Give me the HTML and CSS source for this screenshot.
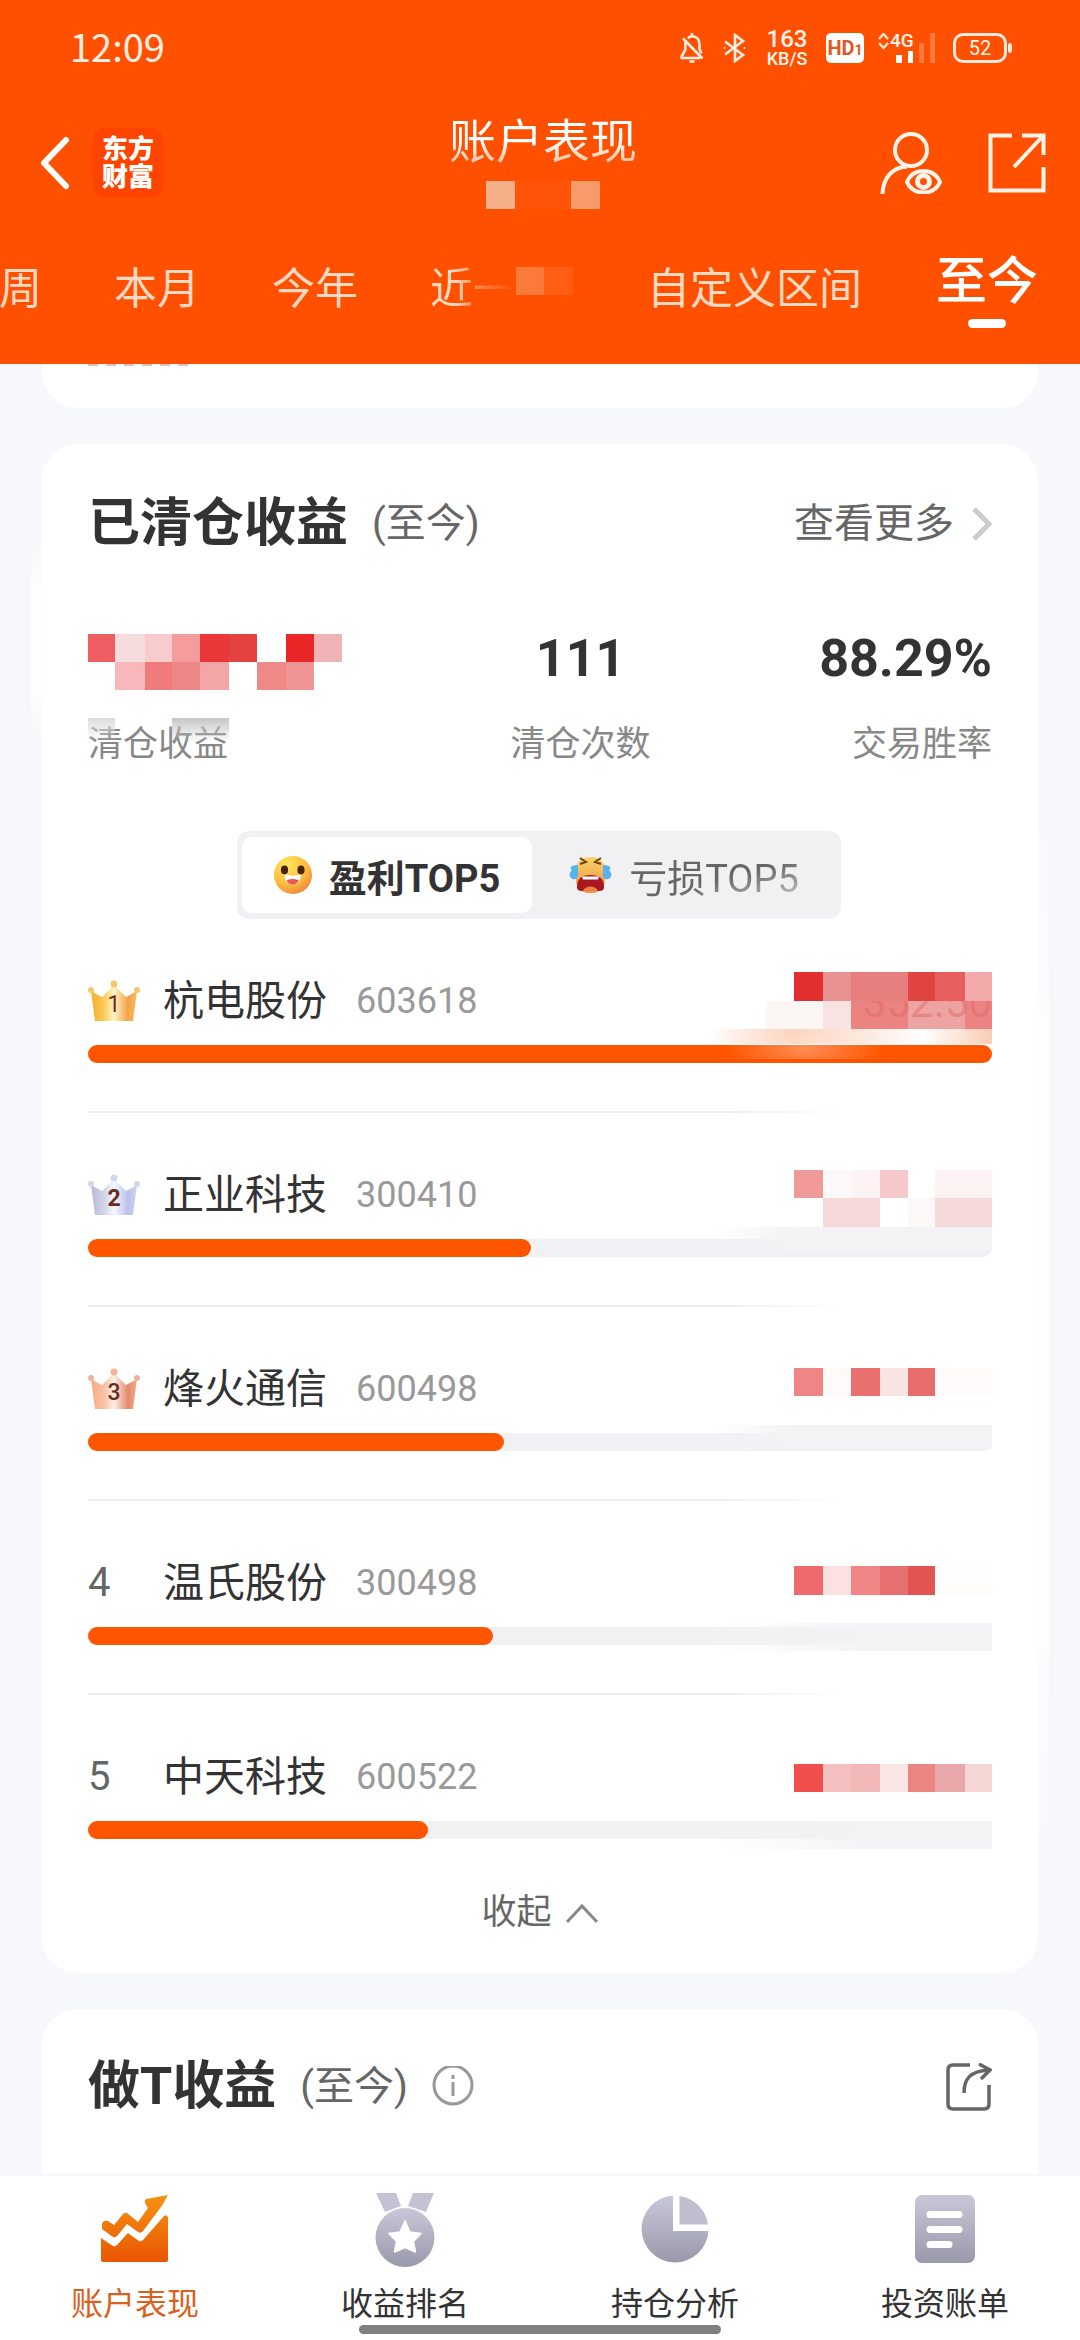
FILE: index.html
```html
<!DOCTYPE html>
<html lang="zh-CN">
<head>
<meta charset="utf-8">
<meta name="viewport" content="width=device-width, initial-scale=1">
<title>账户表现</title>
<link rel="stylesheet" href="styles.css">
</head>
<body>
<div class="app">
  <header class="top">
    <div class="status">
      <span class="clock">12:09</span>
      <div class="status-icons">
        <svg class="ico-bell" width="26" height="30" viewBox="0 0 26 30" fill="none" stroke="#ffeee2" stroke-width="2.6"><path d="M9 5.500C10 4 11.500 3.300 13 3.300c4.500 0 7.500 3.200 7.500 8v5l2 4M6.300 9.500V17L2.500 23.500c-.5 1 0 1.500 1 1.500H21M4 5.500 23.500 25.500"/><path d="M13 0v3M10.500 28.500h5"/></svg>
        <svg class="ico-bt" width="23" height="30" viewBox="0 0 23 30" fill="none" stroke="#ffeee2" stroke-width="2.600"><path d="M2 8.500 20 22 12 28V2l8 6L2 21.500"/><circle cx="1.500" cy="15" r="1" fill="#ffeee2" stroke="none"/><circle cx="21.500" cy="15" r="1" fill="#ffeee2" stroke="none"/></svg>
        <span class="speed"><b>163</b><small>KB/S</small></span>
        <span class="hd">HD<i>1</i></span>
        <span class="signal">
          <svg width="57" height="30" viewBox="0 0 57 30"><path d="M1 6 5.500 1 10 6M1 10l4.500 5 4.500-5" fill="none" stroke="#ffe3d0" stroke-width="2.400"/><path d="M18 22h6v8h-6zM30 18h5v12h-5z" fill="#fff"/><path d="M41 10h5v20h-5zM52 0h5v30h-5z" fill="#ff7a3d"/></svg>
          <b>4G</b>
        </span>
        <span class="battery">52</span>
      </div>
    </div>

    <div class="titlebar">
      <div class="side">
        <button class="icon-btn" aria-label="返回"><svg width="30" height="54" viewBox="0 0 30 54" fill="none" stroke="#fff" stroke-width="6" stroke-linecap="round" stroke-linejoin="round"><path d="M26 4 4 27l22 23"/></svg></button>
        <span class="logo"><span>东方</span><span>财富</span></span>
      </div>
      <div class="title">
        <h1>账户表现</h1>
        <svg width="114" height="28" viewBox="0 0 114 28" shape-rendering="crispEdges"><path fill="#f5b08a" d="M0 0h29v28H0z"/><path fill="#ff5409" d="M29 0h56v28H29z"/><path fill="#f69b69" d="M85 0h29v28H85z"/></svg>
      </div>
      <div class="side side-end">
        <button class="icon-btn" aria-label="查看账户"><svg width="62" height="62" viewBox="0 0 62 62" fill="none" stroke="#fff3ea" stroke-width="4"><circle cx="31" cy="18" r="16"/><path d="M2.500 62C3 46 12 35.500 27 34.500"/><path d="M27 50c3-7 9-11 16.500-11S57 43 60 50c-3 7-9 10.500-16.500 10.500S30 57 27 50z" stroke-width="4"/><circle cx="43.500" cy="49.500" r="6" stroke-width="5"/></svg></button>
        <button class="icon-btn" aria-label="分享"><svg width="58" height="60" viewBox="0 0 58 60" fill="none" stroke="#fff3ea" stroke-width="4"><path d="M24 2.500H2.500V57.500H55.500V34M34 2.500H55.500V22M54 4 26 34"/></svg></button>
      </div>
    </div>

    <nav class="tabs">
      <a href="#week">本周</a>
      <a href="#month">本月</a>
      <a href="#year">今年</a>
      <a href="#last" class="tab-last"><span>近一</span><svg width="57" height="28" viewBox="0 0 57 28" shape-rendering="crispEdges"><path fill="#fa7a3c" d="M0 0h28v28H0z"/><path fill="#ff5c14" d="M28 0h29v28H28z"/></svg></a>
      <a href="#custom" class="tab-custom">自定义区间</a>
      <a href="#all" class="active" aria-current="page">至今</a>
    </nav>
  </header>

  <main>
    <section class="card card-prev"><div class="cut-line"></div></section>

    <section class="card card-closed">
      <div class="card-head">
        <h2>已清仓收益</h2><span class="range">(至今)</span>
        <a class="more" href="#more">查看更多<svg width="22" height="36" viewBox="0 0 22 36" fill="none" stroke="#ccc" stroke-width="5"><path d="M4 3 19 18 4 33"/></svg></a>
      </div>

      <dl class="stats">
        <div class="stat">
          <dt><span class="blot"></span>清仓收益</dt>
          <dd><svg width="254" height="56" viewBox="0 0 254 56" shape-rendering="crispEdges">
            <path fill="#ed5d62" d="M0 0h27v28H0z"/><path fill="#f6dcdd" d="M27 0h30v28H27z"/><path fill="#f8cbcd" d="M57 0h27v28H57z"/><path fill="#f49c9e" d="M84 0h28v28H84z"/><path fill="#ea3739" d="M112 0h29v28h-29z"/><path fill="#e44241" d="M141 0h28v28h-28z"/><path fill="#ea2727" d="M198 0h28v28h-28z"/><path fill="#f0b3b5" d="M226 0h28v28h-28z"/>
            <path fill="#f8b7ba" d="M27 28h30v28H27z"/><path fill="#f07b7c" d="M57 28h27v28H57z"/><path fill="#ed8787" d="M84 28h28v28H84z"/><path fill="#f4a5a7" d="M112 28h29v28h-29z"/><path fill="#ee8988" d="M169 28h29v28h-29z"/><path fill="#ef9595" d="M198 28h28v28h-28z"/>
          </svg></dd>
        </div>
        <div class="stat stat-mid"><dt>清仓次数</dt><dd>111</dd></div>
        <div class="stat stat-end"><dt>交易胜率</dt><dd>88.29%</dd></div>
      </dl>

      <div class="switch">
        <button class="on"><svg width="38" height="38" viewBox="0 0 38 38"><defs><radialGradient id="smile" cx=".35" cy=".25" r=".85"><stop offset="0" stop-color="#ffe75e"/><stop offset=".6" stop-color="#fdbb3d"/><stop offset="1" stop-color="#f07b3e"/></radialGradient></defs><circle cx="19" cy="19" r="19" fill="url(#smile)"/><ellipse cx="10.500" cy="14" rx="3.600" ry="4.400" fill="#4a2208"/><ellipse cx="27" cy="14" rx="3.600" ry="4.400" fill="#4a2208"/><path d="M10.500 18.500c5 1.500 11.500 1.500 16.500 0C27 25.500 23.500 28.500 18.700 28.500s-8.200-3.500-8.200-10z" fill="#fff"/><path d="M12.500 24.500c3.500-2 9-2 12.500 0C23 27.500 21 28.500 18.700 28.500S14 27.500 12.500 24.500z" fill="#ee5a50"/></svg>盈利TOP5</button>
        <button><svg width="43" height="38" viewBox="0 0 43 38"><defs><linearGradient id="cry" x1="0" y1="0" x2="0" y2="1"><stop offset="0" stop-color="#f9d568"/><stop offset="1" stop-color="#f0903e"/></linearGradient></defs><rect x="7" y="1" width="29" height="36" rx="13" fill="url(#cry)"/><path d="M11 2l6 4-6 2M32 2l-6 4 6 2" fill="none" stroke="#71431b" stroke-width="2"/><path d="M9 9C2 9 0 12 3 14c-3 3-3 6-1 8 4 3 7 0 7-3zM34 9c7 0 9 3 6 5 3 3 3 6 1 8-4 3-7 0-7-3z" fill="#54b3ee"/><path d="M8 31c0-8 4-12 13.500-12S35 23 35 31c0 3-2 4-5 4H13c-3 0-5-1-5-4z" fill="#a91820"/><path d="M13 20.500h17l-1 3H14z" fill="#fff"/><path d="M14 35c2-6 13-6 15 0z" fill="#ef7f45"/></svg><span class="faded">亏损TOP5</span></button>
      </div>

      <div class="ranking">
        <ol>
          <li>
            <div class="line"><span class="rank"><svg width="52" height="42" viewBox="0 0 52 42"><defs><linearGradient id="gold"><stop offset="0" stop-color="#f6ae2e"/><stop offset=".25" stop-color="#fbc64f"/><stop offset=".5" stop-color="#fff3c4"/><stop offset=".8" stop-color="#f5a34a"/><stop offset="1" stop-color="#f7bd5d"/></linearGradient></defs><path d="M3 11 14 17 26 5 38 17 49 11 45 41H7z" fill="url(#gold)"/><g fill="#f2c96b"><circle cx="3" cy="10" r="3"/><circle cx="26" cy="4" r="3.500"/><circle cx="49" cy="10" r="3"/></g></svg><b class="thin">1</b></span><span class="name">杭电股份</span><span class="code">603618</span></div>
            <div class="bar"><i style="width:100%"></i></div>
          </li>
          <li>
            <div class="line"><span class="rank"><svg width="52" height="42" viewBox="0 0 52 42"><defs><linearGradient id="silver"><stop offset="0" stop-color="#b9b9d8"/><stop offset=".3" stop-color="#d3d5ea"/><stop offset=".5" stop-color="#f6f8ff"/><stop offset=".8" stop-color="#bcc0e8"/><stop offset="1" stop-color="#d0d4f2"/></linearGradient></defs><path d="M3 11 14 17 26 5 38 17 49 11 45 41H7z" fill="url(#silver)"/><g fill="#d3d6ee"><circle cx="3" cy="10" r="3"/><circle cx="26" cy="4" r="3.500"/><circle cx="49" cy="10" r="3"/></g></svg><b>2</b></span><span class="name">正业科技</span><span class="code">300410</span></div>
            <div class="bar"><i style="width:49%"></i></div>
          </li>
          <li>
            <div class="line"><span class="rank"><svg width="52" height="42" viewBox="0 0 52 42"><defs><linearGradient id="bronze"><stop offset="0" stop-color="#f6ab87"/><stop offset=".3" stop-color="#f8c3a6"/><stop offset=".5" stop-color="#fdefe5"/><stop offset=".8" stop-color="#e58a6b"/><stop offset="1" stop-color="#f0ad92"/></linearGradient></defs><path d="M3 11 14 17 26 5 38 17 49 11 45 41H7z" fill="url(#bronze)"/><g fill="#eeb49d"><circle cx="3" cy="10" r="3"/><circle cx="26" cy="4" r="3.500"/><circle cx="49" cy="10" r="3"/></g></svg><b class="mid">3</b></span><span class="name">烽火通信</span><span class="code">600498</span></div>
            <div class="bar"><i style="width:46%"></i></div>
          </li>
          <li>
            <div class="line"><span class="rank">4</span><span class="name">温氏股份</span><span class="code">300498</span></div>
            <div class="bar"><i style="width:44.8%"></i></div>
          </li>
          <li>
            <div class="line"><span class="rank">5</span><span class="name">中天科技</span><span class="code">600522</span></div>
            <div class="bar"><i style="width:37.6%"></i></div>
          </li>
        </ol>

        <div class="masks">
          <div class="mask mask-hot">
            <svg width="226" height="57" viewBox="0 0 226 57" shape-rendering="crispEdges"><path fill="#e22e2e" d="M28 0h29v29H28z"/><path fill="#e99292" d="M57 0h28v29H57z"/><path fill="#e77f7e" d="M85 0h57v29H85z"/><path fill="#df4342" d="M142 0h27v29h-27z"/><path fill="#e75e5e" d="M169 0h30v29h-30z"/><path fill="#f3aaab" d="M199 0h27v29h-27z"/><path fill="#fcf6f5" d="M0 29h57v28H0z"/><path fill="#f9e2e2" d="M57 29h28v28H57z"/><path fill="#eb8381" d="M85 29h57v28H85z"/><path fill="#eda3a2" d="M142 29h57v28h-57z"/><path fill="#ec8382" d="M199 29h27v28h-27z"/></svg>
            <span class="ghost">352.50</span>
          </div>
          <div class="mask">
            <svg width="226" height="57" viewBox="0 0 226 57" shape-rendering="crispEdges"><path fill="#f09999" d="M28 0h29v28H28z"/><path fill="#fef9f9" d="M57 0h28v28H57z"/><path fill="#fdf3f2" d="M85 0h29v28H85z"/><path fill="#f5c9c9" d="M114 0h28v28h-28z"/><path fill="#fdf3f2" d="M169 0h57v28h-57z"/><path fill="#f6d8d9" d="M57 28h57v29H57z"/><path fill="#fbf8f7" d="M142 28h27v29h-27z"/><path fill="#f6d9da" d="M169 28h57v29h-57z"/></svg>
          </div>
          <div class="mask">
            <svg width="226" height="57" viewBox="0 0 226 57" shape-rendering="crispEdges"><path fill="#ef8685" d="M28 0h29v28H28z"/><path fill="#fefafa" d="M57 0h28v28H57z"/><path fill="#e9706f" d="M85 0h29v28H85z"/><path fill="#fae4e3" d="M114 0h28v28h-28z"/><path fill="#e86e6e" d="M142 0h27v28h-27z"/><path fill="#fffbfa" d="M169 0h57v28h-57z"/></svg>
          </div>
          <div class="mask mask-thin">
            <svg width="226" height="57" viewBox="0 0 226 57" shape-rendering="crispEdges"><path fill="#ef6b6b" d="M28 0h29v29H28z"/><path fill="#fbe2e2" d="M57 0h28v29H57z"/><path fill="#ef8584" d="M85 0h29v29H85z"/><path fill="#e66f6f" d="M114 0h28v29h-28z"/><path fill="#e25553" d="M142 0h27v29h-27z"/><path fill="#fffcfc" d="M169 0h57v29h-57z"/></svg>
          </div>
          <div class="mask mask-thin">
            <svg width="226" height="57" viewBox="0 0 226 57" shape-rendering="crispEdges"><path fill="#f04f4e" d="M28 0h29v28H28z"/><path fill="#f5c0c0" d="M57 0h28v28H57z"/><path fill="#f3b9b9" d="M85 0h29v28H85z"/><path fill="#fae6e5" d="M114 0h28v28h-28z"/><path fill="#eb8582" d="M142 0h27v28h-27z"/><path fill="#e8a8a9" d="M169 0h30v28h-30z"/><path fill="#f6d6d5" d="M199 0h27v28h-27z"/></svg>
          </div>
        </div>
      </div>

      <button class="collapse">收起<svg width="34" height="22" viewBox="0 0 34 22" fill="none" stroke="#888" stroke-width="3"><path d="M2 20 17 4 32 20"/></svg></button>
    </section>

    <section class="card card-t">
      <div class="card-head">
        <h2>做T收益</h2><span class="range">(至今)</span>
        <button class="icon-btn" aria-label="说明"><svg width="42" height="42" viewBox="0 0 42 42" fill="none" stroke="#999" stroke-width="3"><circle cx="21" cy="19" r="19"/><path d="M21 16v14M21 9v4"/></svg></button>
        <button class="icon-btn share" aria-label="分享"><svg width="46" height="48" viewBox="0 0 46 48" fill="none" stroke="#666" stroke-width="3.500"><path d="M24 2H7Q2 2 2 7V41q0 5 5 5H38q5 0 5-5V22"/><path d="M18 30C18 16 24 8 43 7M33 1 44 7 35 16"/></svg></button>
      </div>
    </section>
  </main>

  <nav class="bottom">
    <a href="#performance" class="current" aria-current="page">
      <svg width="70" height="76" viewBox="0 0 70 76"><defs><linearGradient id="hot" x1="0" y1="0" x2="0" y2="1"><stop offset="0" stop-color="#f59310"/><stop offset="1" stop-color="#ea5504"/></linearGradient></defs><path fill="url(#hot)" fill-rule="evenodd" d="M68 4 46 8Q43 10 48 17L38 31 27 22Q25 21 23 23L14 34 8 30Q3 29 2 33V38L13 46Q15 47 17 45L27 33 38 41Q41 43 43 40L58 20Q61 16 63 13zM68 26V69Q68 71 66 71H3Q1 71 1 69V47L13 55Q15 56 17 54L28 42 39 50Q41 51 43 49L64 25Q66 23 68 26z"/></svg>
      账户表现</a>
    <a href="#rank">
      <svg width="60" height="76" viewBox="0 0 60 76"><defs><linearGradient id="cool" x1="0" y1="0" x2="0" y2="1"><stop offset="0" stop-color="#c9c8d9"/><stop offset="1" stop-color="#9a99ab"/></linearGradient></defs><path fill="#c3c2d4" d="M1 2H21L26 15 10 21zM38 2H59L51 21 33 15z"/><circle cx="30" cy="46.500" r="29.500" fill="url(#cool)"/><path fill="#fff" d="M30 30 35 41 46 42.500 38.500 50.500 40.500 61 30 56.500 19.500 61 21.500 50.500 14 42.500 25 41z" stroke="#fff" stroke-width="1.500" stroke-linejoin="round"/></svg>
      收益排名</a>
    <a href="#holdings">
      <svg width="68" height="76" viewBox="0 0 68 76"><path fill="url(#cool)" d="M32 4.500V40H67.500A33.500 33.500 0 1 1 32 4.500z"/><path fill="#bfbecf" d="M38.500 5A33.500 33.500 0 0 1 67 33.500H38.500z"/></svg>
      持仓分析</a>
    <a href="#bills">
      <svg width="60" height="76" viewBox="0 0 60 76"><rect y="4" width="60" height="68" rx="7" fill="url(#cool)"/><path d="M15 23.500H44M15 38.500H44M15 53.500H34" stroke="#fff" stroke-width="7" stroke-linecap="round"/></svg>
      投资账单</a>
    <span class="home-bar"></span>
  </nav>
</div>
</body>
</html>
```

FILE: styles.css
```css
* { box-sizing: border-box; }

body {
  margin: 0;
  font-family: Roboto, "Noto Sans CJK SC", sans-serif;
  color: #333;
  background: #f6f8fb;
}

h1, h2, dl, dd, ol { margin: 0; padding: 0; }
ol { list-style: none; }
a { color: inherit; text-decoration: none; }
svg { display: block; flex: none; }

button {
  padding: 0;
  border: 0;
  background: none;
  font: inherit;
  color: inherit;
}

.app {
  display: flex;
  flex-direction: column;
  min-height: 100vh;
  overflow: hidden;
}

/* Header */
.top { background: #ff5000; color: #fff; }

.status {
  display: flex;
  align-items: center;
  justify-content: space-between;
  height: 96px;
  padding: 0 68px 0 70px;
}

.clock {
  font: 38px/44px "Noto Sans CJK SC", sans-serif;
  padding-bottom: 4px;
  color: #ffeee2;
}

.status-icons { display: flex; align-items: center; color: #fff3ea; }
.ico-bell { margin-right: 18px; }
.ico-bt { margin-right: 20px; }

.speed {
  display: flex;
  flex-direction: column;
  align-items: center;
  width: 42px;
  margin-right: 18px;
}
.speed b { font-size: 24px; line-height: 22px; font-weight: 500; }
.speed small { font-size: 18px; line-height: 18px; font-weight: 500; }

.hd {
  width: 38px;
  height: 30px;
  margin-right: 14px;
  border-radius: 5px;
  background: #fff;
  color: #e0581c;
  font-size: 20px;
  line-height: 31px;
  font-weight: 700;
  text-align: center;
}
.hd i { font-size: 14px; font-style: normal; }

.signal { position: relative; margin-right: 18px; }
.signal b {
  position: absolute;
  left: 12px;
  top: 0;
  font-size: 19px;
  line-height: 16px;
  font-weight: 500;
}

.battery {
  position: relative;
  width: 54px;
  height: 30px;
  margin-right: 5px;
  border: 3px solid #ffe9da;
  border-radius: 10px;
  font-size: 20px;
  line-height: 25px;
  text-align: center;
}
.battery::after {
  content: "";
  position: absolute;
  right: -8px;
  top: 7px;
  width: 4px;
  height: 10px;
  border-radius: 2px;
  background: #ffe9da;
}

.titlebar {
  display: flex;
  align-items: center;
  justify-content: space-between;
  height: 134px;
  padding: 0 34px 0 40px;
}
.side { display: flex; align-items: center; gap: 23px; flex: 1; }
.side-end { justify-content: flex-end; gap: 46px; }

.logo {
  width: 70px;
  height: 70px;
  padding: 7px 0;
  border-radius: 12px;
  background: #ff4400;
  font-size: 26px;
  line-height: 28px;
  font-weight: 900;
  text-align: center;
}
.logo span { display: block; }

.title { display: flex; flex-direction: column; align-items: center; gap: 14px; }
.title h1 {
  font-size: 47px;
  line-height: 50px;
  font-weight: 400;
  background: linear-gradient(#fff 50%, #ffb68f);
  background-clip: text;
  -webkit-text-fill-color: transparent;
}

.tabs {
  display: flex;
  justify-content: flex-end;
  gap: 72px;
  height: 134px;
  padding: 26px 42px 0 0;
  overflow: hidden;
  white-space: nowrap;
  font-size: 43px;
  line-height: 44px;
  color: #ffd9c2;
}
.tabs a { flex: none; padding-top: 11px; }
.tabs .tab-last { display: flex; }
.tab-last span {
  background: linear-gradient(90deg, #ffd9c2 25px, #ff8f5a 43px, #ff5000 84px);
  background-clip: text;
  -webkit-text-fill-color: transparent;
}
.tabs .tab-custom { padding-left: 2px; padding-right: 2px; }
.tabs .active {
  padding-top: 0;
  color: #fff;
  font-size: 51px;
  line-height: 52px;
  font-weight: 500;
}
.active::after {
  content: "";
  display: block;
  width: 38px;
  height: 9px;
  margin: 11px auto 0;
  border-radius: 5px;
  background: #fff;
}

/* Cards */
main {
  flex: 1;
  display: flex;
  flex-direction: column;
  gap: 36px;
  padding: 0 42px;
}

.card {
  position: relative;
  padding: 46px;
  border-radius: 36px;
  background: #fff;
}

.card-prev { height: 44px; padding: 0 46px; border-radius: 0 0 36px 36px; }
.cut-line {
  width: 100px;
  height: 2px;
  background: repeating-linear-gradient(90deg, #e9bdb5 0 10px, #fff 10px 18px);
}

.card-head { display: flex; align-items: center; height: 64px; }
.card-head h2 { font-size: 52px; line-height: 64px; font-weight: 700; }
.range { margin-left: 24px; font-size: 40px; line-height: 64px; color: #666; }
.range + .icon-btn { margin-left: 24px; }
.share { margin-left: auto; }
.more {
  display: flex;
  align-items: center;
  gap: 16px;
  margin-left: auto;
  font-size: 40px;
  line-height: 64px;
  color: #666;
}

.card-closed { padding-top: 48px; padding-bottom: 36px; }
/* Pale halo at the card's edges */
.card-closed::before,
.card-closed::after {
  content: "";
  position: absolute;
  width: 11px;
  background: linear-gradient(#fcfdfd00, #fcfdfd 20%, #fcfdfd 80%, #fcfdfd00);
}
.card-closed::before { left: -11px; top: 104px; height: 186px; }
.card-closed::after { right: -11px; top: 376px; height: 1020px; }

.stats { display: flex; justify-content: space-between; margin-top: 76px; }
.stat { display: flex; flex-direction: column-reverse; gap: 33px; }
.stat-mid { align-items: center; }
.stat-end { align-items: flex-end; }
.stat dt { position: relative; font-size: 35px; line-height: 44px; color: #888; }
.stat dd {
  display: flex;
  align-items: flex-end;
  height: 58px;
  font-size: 52px;
  line-height: 54px;
  font-weight: 700;
}
.stat-mid dd, .stat-end dd { align-items: flex-start; }
.blot {
  position: absolute;
  left: 0;
  top: -5px;
  width: 141px;
  height: 24px;
  background:
    linear-gradient(#dddddd, #ffffff00) 0 0 / 27px 100% no-repeat,
    linear-gradient(#c6c6c6, #ffffff00) 84px 0 / 57px 100% no-repeat;
}

.switch {
  display: flex;
  width: 604px;
  height: 88px;
  margin: 64px 0 0 149px;
  padding: 6px 5px;
  border-radius: 12px;
  background: #f1f1f4;
  font-size: 38px;
  color: #666;
}
.switch button {
  flex: 1;
  display: flex;
  align-items: center;
  justify-content: center;
  gap: 17px;
  border-radius: 10px;
}
.switch .on { flex: 0 0 290px; background: #fff; color: #333; font-weight: 700; }
.faded {
  background: linear-gradient(165deg, #666 55%, #bbb 90%);
  background-clip: text;
  -webkit-text-fill-color: transparent;
}

/* Ranking */
.ranking { position: relative; }
.ranking li {
  padding: 58px 0 48px;
  border-bottom: 2px solid;
  border-image: linear-gradient(90deg, #eee 70%, #fff 84%) 1;
}
.ranking li:last-child { border-color: #fff; border-image: none; }
.line { display: flex; align-items: center; line-height: 48px; }
.rank { position: relative; width: 75px; font-size: 40px; color: #666; }
.rank b {
  position: absolute;
  left: 0;
  top: 3px;
  width: 52px;
  font-size: 23px;
  line-height: 44px;
  text-align: center;
  color: #6b2a1c;
}
.rank .thin { font-weight: 400; }
.rank .mid { font-weight: 500; }
.name { font-size: 41px; }
.code { margin-left: 29px; font-size: 36px; color: #999; }
.bar {
  height: 18px;
  margin-top: 20px;
  border-radius: 9px;
  background: #f1f1f4;
}
.bar i { display: block; height: 100%; border-radius: 9px; background: #ff5500; }

.masks {
  position: absolute;
  right: 0;
  top: 53px;
  display: grid;
  grid-auto-rows: 198px;
  width: 282px;
}
.mask { position: relative; }
.mask svg { margin-left: auto; }
.mask::after {
  content: "";
  display: block;
  height: 24px;
  background: linear-gradient(90deg, #f3f3f500, #f3f3f5 30%);
}
.mask-thin::after { height: 28px; background: linear-gradient(90deg, #f3f3f500, #f3f3f5 60%); }
.mask-hot::after {
  height: 30px;
  background:
    radial-gradient(ellipse 80px 30px at 95px 20px, #ffffff55, #ffffff00),
    linear-gradient(90deg, #fbcdb400, #fbcdb4 30%, #fff 75%, #fbcdb4) 0 0 / 100% 15px no-repeat;
}
.ghost {
  position: absolute;
  right: 0;
  top: 29px;
  height: 28px;
  overflow: hidden;
  font-size: 42px;
  line-height: 4px;
  color: #e26a6a88;
}

.collapse {
  display: flex;
  align-items: center;
  justify-content: center;
  gap: 13px;
  width: 100%;
  font-size: 35px;
  line-height: 48px;
  color: #666;
}

.card-t { flex: 1; padding-bottom: 55px; border-radius: 36px 36px 0 0; }

/* Bottom navigation */
.bottom {
  position: relative;
  display: grid;
  grid-template-columns: repeat(4, 1fr);
  padding: 15px 0 16px;
  border-top: 2px solid #f6f7f9;
  background: #fff;
  font-size: 32px;
  line-height: 40px;
}
.bottom a { display: flex; flex-direction: column; align-items: center; gap: 17px; }
.bottom .current { color: #d9611e; }
.home-bar {
  position: absolute;
  left: 50%;
  bottom: 6px;
  width: 362px;
  height: 9px;
  margin-left: -181px;
  border-radius: 5px;
  background: #808080;
}
```
